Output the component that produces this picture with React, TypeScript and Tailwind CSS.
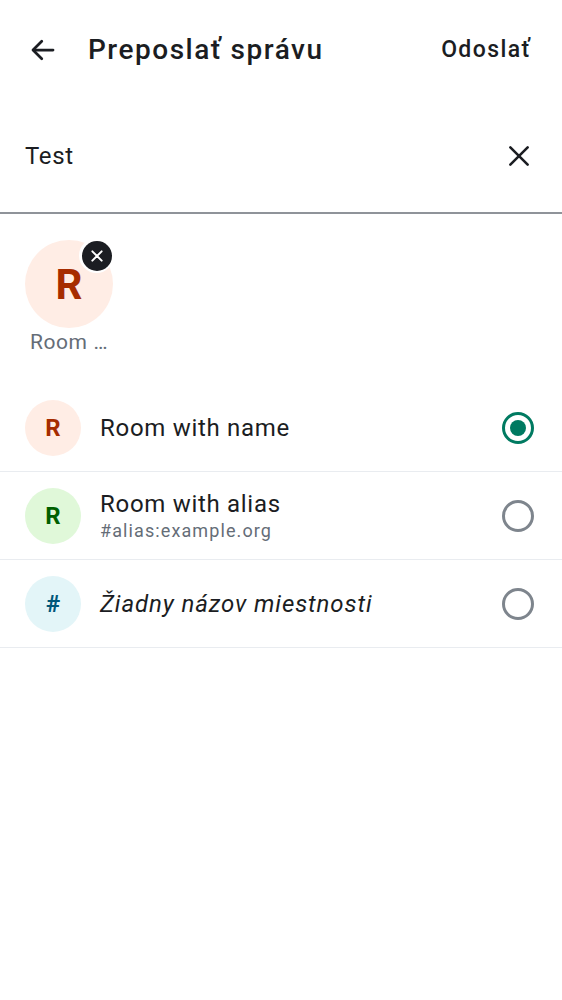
import React from "react";

type Room = {
  letter: string;
  name: string;
  alias?: string;
  italic?: boolean;
  bg: string;
  fg: string;
  selected?: boolean;
};

const rooms: Room[] = [
  { letter: "R", name: "Room with name", bg: "bg-[#ffede5]", fg: "text-[#a62c00]", selected: true },
  { letter: "R", name: "Room with alias", alias: "#alias:example.org", bg: "bg-[#e0f8d9]", fg: "text-[#005f00]" },
  { letter: "#", name: "Žiadny názov miestnosti", italic: true, bg: "bg-[#e3f5f8]", fg: "text-[#00577a]" },
];

function Radio({ checked }: { checked?: boolean }) {
  if (checked) {
    return (
      <div className="w-[32px] h-[32px] rounded-full border-[3px] border-[#007a61] flex items-center justify-center">
        <div className="w-[16px] h-[16px] rounded-full bg-[#007a61]" />
      </div>
    );
  }
  return <div className="w-[32px] h-[32px] rounded-full border-[3px] border-[#7e858d]" />;
}

export default function App() {
  return (
    <div className="w-[562px] h-[1000px] bg-white text-[#1b1d22]" style={{ fontFamily: "Roboto, 'Noto Sans', sans-serif" }}>
      {/* top bar */}
      <div className="h-[100px] flex items-center pl-[28px] pr-[31px]">
        <svg width="30" height="30" viewBox="0 0 24 24" fill="none" stroke="#1b1d22" strokeWidth="2.2" strokeLinecap="round" strokeLinejoin="round">
          <path d="M20 12H4.5" />
          <path d="M11 5l-7 7 7 7" />
        </svg>
        <h1 className="ml-[30px] text-[28px] font-medium tracking-[1.5px] flex-1">Preposlať správu</h1>
        <span className="text-[23px] font-medium tracking-[1.4px]">Odoslať</span>
      </div>

      {/* search */}
      <div className="h-[112px] flex items-center pl-[25px] pr-[30px]">
        <span className="flex-1 text-[24px] tracking-[0.7px]">Test</span>
        <svg width="26" height="26" viewBox="0 0 24 24" fill="none" stroke="#1b1d22" strokeWidth="2.4" strokeLinecap="round">
          <path d="M4 4l16 16M20 4L4 20" />
        </svg>
      </div>
      <div className="h-[2px] bg-[#8f9399]" />

      {/* selected chips */}
      <div className="pt-[26px] pl-[25px] h-[170px]">
        <div className="w-[88px] flex flex-col items-center">
          <div className="relative">
            <div className="w-[88px] h-[88px] rounded-full bg-[#ffede5] flex items-center justify-center">
              <span className="text-[42px] font-bold text-[#a62c00]">R</span>
            </div>
            <div className="absolute -top-[2px] -right-[1px] w-[35px] h-[35px] rounded-full bg-white flex items-center justify-center">
              <div className="w-[30px] h-[30px] rounded-full bg-[#1b1d22] flex items-center justify-center">
                <svg width="14" height="14" viewBox="0 0 24 24" fill="none" stroke="white" strokeWidth="3.4" strokeLinecap="round">
                  <path d="M4 4l16 16M20 4L4 20" />
                </svg>
              </div>
            </div>
          </div>
          <span className="-mt-[1px] text-[21px] tracking-[0.6px] text-[#656d77] whitespace-nowrap">Room …</span>
        </div>
      </div>

      {/* room list */}
      <div>
        {rooms.map((room, i) => (
          <div key={i} className="h-[88px] flex items-center pl-[25px] pr-[28px] border-b border-[#e9ecf0]">
            <div className={`w-[56px] h-[56px] rounded-full flex items-center justify-center ${room.bg}`}>
              <span className={`text-[24px] font-bold ${room.fg}`}>{room.letter}</span>
            </div>
            <div className="flex-1 ml-[19px] flex flex-col">
              <span className={`text-[24px] leading-[30px] ${room.italic ? "italic tracking-[0.9px]" : "tracking-[0.7px]"}`}>{room.name}</span>
              {room.alias && <span className="text-[18px] leading-[24px] text-[#656d77] tracking-[1.1px]">{room.alias}</span>}
            </div>
            <Radio checked={room.selected} />
          </div>
        ))}
      </div>
    </div>
  );
}
